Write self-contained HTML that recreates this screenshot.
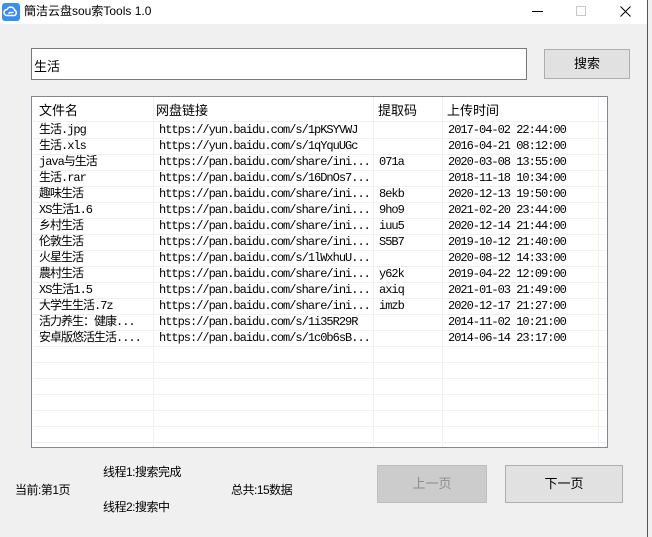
<!DOCTYPE html>
<html><head><meta charset="utf-8"><style>
*{margin:0;padding:0;box-sizing:border-box}
body{width:652px;height:537px;background:#f0f0f0;position:relative;overflow:hidden;font-family:"Liberation Sans","Noto Sans CJK SC",sans-serif;font-size:12px;color:#000}
.abs{position:absolute}
#title{left:0;top:0;width:648px;height:24px;background:#fff}
#edge{left:647px;top:0;width:5px;height:537px;background:#f0f0f0;border-left:1px solid #555}
.cell{position:absolute;font-family:"Liberation Mono","Noto Sans CJK SC",monospace;font-size:12px;letter-spacing:-1px;white-space:nowrap;line-height:16px;height:16px}
.hl{position:absolute;left:1px;width:574px;height:1px;background:#f0f0f0}
.vl{position:absolute;top:0;width:1px;height:350px;background:#f0f0f0}
.btn{position:absolute;border:1px solid #adadad;background:#e1e1e1;text-align:center;font-size:13px}
.lbl{position:absolute;font-size:12px;white-space:nowrap;letter-spacing:-0.5px}
</style></head><body>
<div id="title" class="abs">
 <svg class="abs" style="left:2px;top:3px" width="18" height="18" viewBox="0 0 18 18"><rect width="18" height="18" rx="3" fill="#3a8ef0"/><path d="M5 12.5a3 3 0 0 1 0-6a4 4 0 0 1 7.5 0.5a3 3 0 0 1 0 5.5z M6.5 10.5c1.5-2 3.5 0 5 -1.5" fill="none" stroke="#fff" stroke-width="1.5"/></svg>
 <div class="abs" style="left:24px;top:2px;font-size:12px;white-space:nowrap">簡洁云盘sou索Tools 1.0</div>
 <div class="abs" style="left:532px;top:11px;width:11px;height:1px;background:#000"></div>
 <div class="abs" style="left:576px;top:6px;width:10px;height:10px;border:1px solid #c8c8c8"></div>
 <svg class="abs" style="left:620px;top:6px" width="11" height="11" viewBox="0 0 11 11"><path d="M0.5 0.5L10.5 10.5M10.5 0.5L0.5 10.5" stroke="#000" stroke-width="1"/></svg>
</div>
<div id="edge" class="abs"></div>
<div class="abs" style="left:31px;top:48px;width:496px;height:32px;background:#fff;border:1px solid #7a7a7a"><div style="position:absolute;left:2px;top:7px;font-size:13px">生活</div></div>
<div class="btn" style="left:544px;top:49px;width:86px;height:30px;line-height:28px">搜索</div>
<div class="abs" style="left:31px;top:96px;width:577px;height:352px;background:#fff;border:1px solid #828790;overflow:hidden">
 <div class="vl" style="left:121px"></div><div class="vl" style="left:341px"></div><div class="vl" style="left:410px"></div><div class="vl" style="left:566px"></div>
 <div class="abs" style="left:7px;top:3px;font-size:13px">文件名</div>
 <div class="abs" style="left:124px;top:3px;font-size:13px">网盘链接</div>
 <div class="abs" style="left:346px;top:3px;font-size:13px">提取码</div>
 <div class="abs" style="left:415px;top:3px;font-size:13px">上传时间</div>
 <div class="hl" style="top:41px"></div><div class="hl" style="top:57px"></div><div class="hl" style="top:73px"></div><div class="hl" style="top:89px"></div><div class="hl" style="top:105px"></div><div class="hl" style="top:121px"></div><div class="hl" style="top:137px"></div><div class="hl" style="top:153px"></div><div class="hl" style="top:169px"></div><div class="hl" style="top:185px"></div><div class="hl" style="top:201px"></div><div class="hl" style="top:217px"></div><div class="hl" style="top:233px"></div><div class="hl" style="top:249px"></div><div class="hl" style="top:265px"></div><div class="hl" style="top:281px"></div><div class="hl" style="top:297px"></div><div class="hl" style="top:313px"></div><div class="hl" style="top:329px"></div><div class="hl" style="top:345px"></div>
 <div class="cell" style="left:7px;top:25px">生活.jpg</div><div class="cell" style="left:127px;top:25px">https://yun.baidu.com/s/1pKSYVWJ</div><div class="cell" style="left:416px;top:25px">2017-04-02 22:44:00</div>
 <div class="cell" style="left:7px;top:41px">生活.xls</div><div class="cell" style="left:127px;top:41px">https://yun.baidu.com/s/1qYquUGc</div><div class="cell" style="left:416px;top:41px">2016-04-21 08:12:00</div>
 <div class="cell" style="left:7px;top:57px">java与生活</div><div class="cell" style="left:127px;top:57px">https://pan.baidu.com/share/ini...</div><div class="cell" style="left:347px;top:57px">071a</div><div class="cell" style="left:416px;top:57px">2020-03-08 13:55:00</div>
 <div class="cell" style="left:7px;top:73px">生活.rar</div><div class="cell" style="left:127px;top:73px">https://pan.baidu.com/s/16DnOs7...</div><div class="cell" style="left:416px;top:73px">2018-11-18 10:34:00</div>
 <div class="cell" style="left:7px;top:89px">趣味生活</div><div class="cell" style="left:127px;top:89px">https://pan.baidu.com/share/ini...</div><div class="cell" style="left:347px;top:89px">8ekb</div><div class="cell" style="left:416px;top:89px">2020-12-13 19:50:00</div>
 <div class="cell" style="left:7px;top:105px">XS生活1.6</div><div class="cell" style="left:127px;top:105px">https://pan.baidu.com/share/ini...</div><div class="cell" style="left:347px;top:105px">9ho9</div><div class="cell" style="left:416px;top:105px">2021-02-20 23:44:00</div>
 <div class="cell" style="left:7px;top:121px">乡村生活</div><div class="cell" style="left:127px;top:121px">https://pan.baidu.com/share/ini...</div><div class="cell" style="left:347px;top:121px">iuu5</div><div class="cell" style="left:416px;top:121px">2020-12-14 21:44:00</div>
 <div class="cell" style="left:7px;top:137px">伦敦生活</div><div class="cell" style="left:127px;top:137px">https://pan.baidu.com/share/ini...</div><div class="cell" style="left:347px;top:137px">S5B7</div><div class="cell" style="left:416px;top:137px">2019-10-12 21:40:00</div>
 <div class="cell" style="left:7px;top:153px">火星生活</div><div class="cell" style="left:127px;top:153px">https://pan.baidu.com/s/1lWxhuU...</div><div class="cell" style="left:416px;top:153px">2020-08-12 14:33:00</div>
 <div class="cell" style="left:7px;top:169px">農村生活</div><div class="cell" style="left:127px;top:169px">https://pan.baidu.com/share/ini...</div><div class="cell" style="left:347px;top:169px">y62k</div><div class="cell" style="left:416px;top:169px">2019-04-22 12:09:00</div>
 <div class="cell" style="left:7px;top:185px">XS生活1.5</div><div class="cell" style="left:127px;top:185px">https://pan.baidu.com/share/ini...</div><div class="cell" style="left:347px;top:185px">axiq</div><div class="cell" style="left:416px;top:185px">2021-01-03 21:49:00</div>
 <div class="cell" style="left:7px;top:201px">大学生生活.7z</div><div class="cell" style="left:127px;top:201px">https://pan.baidu.com/share/ini...</div><div class="cell" style="left:347px;top:201px">imzb</div><div class="cell" style="left:416px;top:201px">2020-12-17 21:27:00</div>
 <div class="cell" style="left:7px;top:217px">活力养生：健康...</div><div class="cell" style="left:127px;top:217px">https://pan.baidu.com/s/1i35R29R</div><div class="cell" style="left:416px;top:217px">2014-11-02 10:21:00</div>
 <div class="cell" style="left:7px;top:233px">安卓版悠活生活....</div><div class="cell" style="left:127px;top:233px">https://pan.baidu.com/s/1c0b6sB...</div><div class="cell" style="left:416px;top:233px">2014-06-14 23:17:00</div>
 <div class="hl" style="top:24px"></div>
</div>
<div class="lbl" style="left:103px;top:463px">线程1:搜索完成</div>
<div class="lbl" style="left:15px;top:481px">当前:第1页</div>
<div class="lbl" style="left:231px;top:481px">总共:15数据</div>
<div class="lbl" style="left:103px;top:498px">线程2:搜索中</div>
<div class="btn" style="left:377px;top:465px;width:110px;height:38px;line-height:36px;background:#cccccc;border-color:#bfbfbf;color:#8d8d8d">上一页</div>
<div class="btn" style="left:505px;top:465px;width:118px;height:38px;line-height:36px">下一页</div>
</body></html>
